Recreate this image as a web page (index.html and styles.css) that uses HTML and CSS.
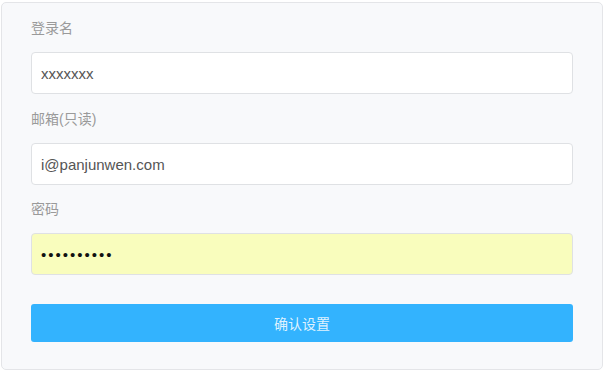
FILE: index.html
```html
<!DOCTYPE html>
<html lang="zh-CN">
<head>
    <meta charset="UTF-8">
    <meta name="viewport" content="width=device-width, initial-scale=1.0">
    <title>账号设置</title>
    <link rel="stylesheet" href="styles.css">
</head>
<body>
    <form class="card">
        <!-- 登录名 -->
        <div class="field">
            <label class="label">登录名</label>
            <input class="input" type="text" value="xxxxxxx">
        </div>

        <!-- 邮箱 -->
        <div class="field">
            <label class="label">邮箱(只读)</label>
            <input class="input" type="text" value="i@panjunwen.com" readonly>
        </div>

        <!-- 密码 -->
        <div class="field">
            <label class="label">密码</label>
            <input class="input autofill" type="password" value="1234567890">
        </div>

        <button class="submit" type="button">确认设置</button>
    </form>
</body>
</html>
```

FILE: styles.css
```css
body, html {
    margin: 0;
    padding: 0;
    background: #ffffff;
    font-family: "Liberation Sans", "Noto Sans CJK SC", sans-serif;
}
.card {
    margin: 2px 2px 0 1px;
    height: 368px;
    box-sizing: border-box;
    padding: 15px 29px 0 29px;
    background: #f8f9fb;
    border: 1px solid #e4e5e8;
    border-radius: 5px;
    display: flex;
    flex-direction: column;
}
.field {
    display: flex;
    flex-direction: column;
    margin-bottom: 15px;
}
.field:nth-child(2) {
    margin-bottom: 14px;
}
.label {
    font-size: 14px;
    line-height: 20px;
    color: #9a9a9a;
    margin-bottom: 14px;
}
.input {
    height: 42px;
    box-sizing: border-box;
    padding: 0 9px;
    border: 1px solid #dfe1e4;
    border-radius: 4px;
    background: #ffffff;
    font-family: "Liberation Sans", sans-serif;
    font-size: 15px;
    color: #555555;
    outline: none;
}
.autofill {
    background: #f9fdbd;
    color: #111111;
    letter-spacing: 2px;
}
.submit {
    margin-top: 14px;
    height: 38px;
    border: none;
    border-radius: 3px;
    background: #33b3fe;
    color: #dff2ff;
    font-family: "Noto Sans CJK SC", sans-serif;
    font-size: 14px;
    cursor: pointer;
}
```
